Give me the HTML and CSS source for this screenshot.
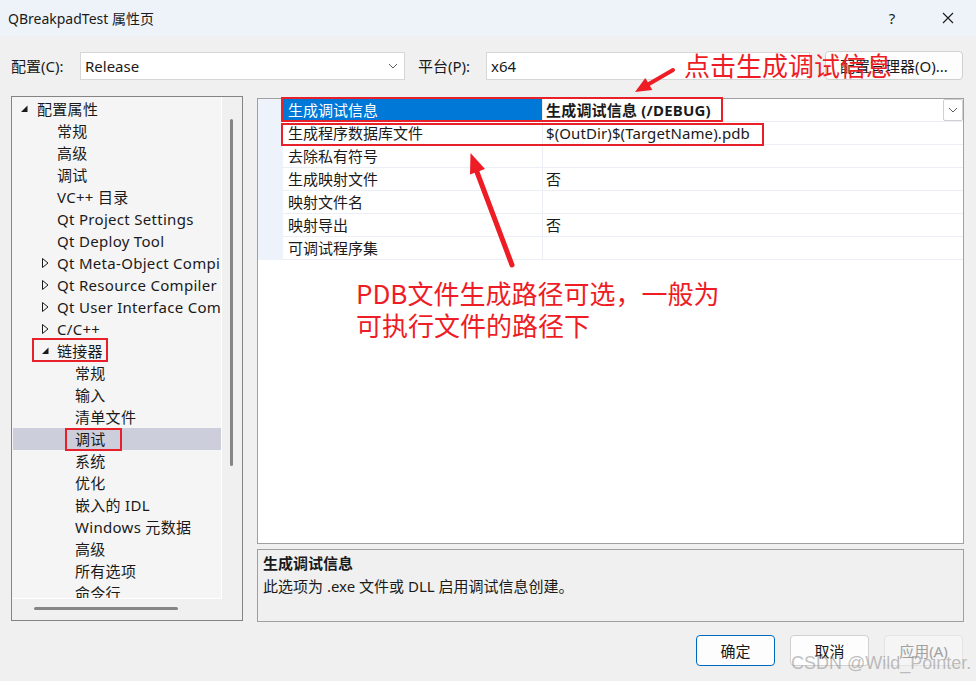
FILE: index.html
```html
<!DOCTYPE html>
<html lang="zh-CN">
<head>
<meta charset="utf-8">
<title>QBreakpadTest 属性页</title>
<link rel="stylesheet" href="styles.css">
</head>
<body>
<div class="window">
  <div class="titlebar">
    <span class="title">QBreakpadTest 属性页</span>
    <div class="tb-btns">
      <span class="tb-btn help">?</span>
      <span class="tb-btn close">
        <svg width="12" height="12" viewBox="0 0 12 12"><path d="M1 1L11 11M11 1L1 11" stroke="#1a1a1a" stroke-width="1.1" fill="none"/></svg>
      </span>
    </div>
  </div>

  <div class="content">
    <div class="toprow">
      <span class="lbl lbl-cfg">配置(C):</span>
      <div class="select sel-cfg"><span>Release</span>
        <svg class="chev" width="10" height="6" viewBox="0 0 10 6"><path d="M1 1L5 5L9 1" stroke="#606060" fill="none" stroke-width="1"/></svg>
      </div>
      <span class="lbl lbl-plat">平台(P):</span>
      <div class="select sel-plat"><span>x64</span></div>
      <button class="btn cfgmgr">配置管理器(O)...</button>
    </div>

    <div class="panes">
      <div class="tree">
        <div class="tree-body">
          <div class="node l0"><svg class="exp" width="18" height="16" viewBox="0 0 18 16"><path d="M8.5 4.5L8.5 11L2 11Z" fill="#1a1a1a"/></svg><span>配置属性</span></div>
          <div class="node l1"><span class="ic"></span><span>常规</span></div>
          <div class="node l1"><span class="ic"></span><span>高级</span></div>
          <div class="node l1"><span class="ic"></span><span>调试</span></div>
          <div class="node l1"><span class="ic"></span><span>VC++ 目录</span></div>
          <div class="node l1"><span class="ic"></span><span>Qt Project Settings</span></div>
          <div class="node l1"><span class="ic"></span><span>Qt Deploy Tool</span></div>
          <div class="node l1c"><svg class="exp" width="18" height="16" viewBox="0 0 18 16"><path d="M2.5 3.5L8 8L2.5 12.5Z" stroke="#1a1a1a" fill="none" stroke-width="1"/></svg><span>Qt Meta-Object Compiler</span></div>
          <div class="node l1c"><svg class="exp" width="18" height="16" viewBox="0 0 18 16"><path d="M2.5 3.5L8 8L2.5 12.5Z" stroke="#1a1a1a" fill="none" stroke-width="1"/></svg><span>Qt Resource Compiler</span></div>
          <div class="node l1c"><svg class="exp" width="18" height="16" viewBox="0 0 18 16"><path d="M2.5 3.5L8 8L2.5 12.5Z" stroke="#1a1a1a" fill="none" stroke-width="1"/></svg><span>Qt User Interface Compiler</span></div>
          <div class="node l1c"><svg class="exp" width="18" height="16" viewBox="0 0 18 16"><path d="M2.5 3.5L8 8L2.5 12.5Z" stroke="#1a1a1a" fill="none" stroke-width="1"/></svg><span>C/C++</span></div>
          <div class="node l1c"><svg class="exp" width="18" height="16" viewBox="0 0 18 16"><path d="M8.5 4.5L8.5 11L2 11Z" fill="#1a1a1a"/></svg><span>链接器</span></div>
          <div class="node l2"><span class="ic"></span><span>常规</span></div>
          <div class="node l2"><span class="ic"></span><span>输入</span></div>
          <div class="node l2"><span class="ic"></span><span>清单文件</span></div>
          <div class="node l2 selected"><span class="ic"></span><span>调试</span></div>
          <div class="node l2"><span class="ic"></span><span>系统</span></div>
          <div class="node l2"><span class="ic"></span><span>优化</span></div>
          <div class="node l2"><span class="ic"></span><span>嵌入的 IDL</span></div>
          <div class="node l2"><span class="ic"></span><span>Windows 元数据</span></div>
          <div class="node l2"><span class="ic"></span><span>高级</span></div>
          <div class="node l2"><span class="ic"></span><span>所有选项</span></div>
          <div class="node l2"><span class="ic"></span><span>命令行</span></div>
        </div>
        <div class="vscroll"><div class="vthumb"></div></div>
        <div class="hscroll"><div class="hthumb"></div></div>
        <div class="corner"></div>
      </div>

      <div class="rightcol">
        <div class="grid">
          <div class="prow active">
            <div class="gut"></div>
            <div class="pname">生成调试信息</div>
            <div class="pval"><b>生成调试信息 (/DEBUG)</b>
              <span class="ddbtn"><svg width="10" height="6" viewBox="0 0 10 6"><path d="M1 1L5 5L9 1" stroke="#606060" fill="none" stroke-width="1"/></svg></span>
            </div>
          </div>
          <div class="prow"><div class="gut"></div><div class="pname">生成程序数据库文件</div><div class="pval">$(OutDir)$(TargetName).pdb</div></div>
          <div class="prow"><div class="gut"></div><div class="pname">去除私有符号</div><div class="pval"></div></div>
          <div class="prow"><div class="gut"></div><div class="pname">生成映射文件</div><div class="pval">否</div></div>
          <div class="prow"><div class="gut"></div><div class="pname">映射文件名</div><div class="pval"></div></div>
          <div class="prow"><div class="gut"></div><div class="pname">映射导出</div><div class="pval">否</div></div>
          <div class="prow"><div class="gut"></div><div class="pname">可调试程序集</div><div class="pval"></div></div>
        </div>
        <div class="desc">
          <div class="desc-title">生成调试信息</div>
          <div class="desc-text">此选项为 .exe 文件或 DLL 启用调试信息创建。</div>
        </div>
      </div>
    </div>

    <div class="buttons">
      <button class="btn dlg primary">确定</button>
      <button class="btn dlg">取消</button>
      <button class="btn dlg disabled">应用(A)</button>
    </div>
  </div>

  <svg class="marks" width="976" height="681" viewBox="0 0 976 681">
    <g fill="none" stroke="#e8202a" stroke-width="2">
      <rect x="282" y="98" width="440" height="23"/>
      <rect x="282" y="124" width="481" height="21"/>
      <rect x="33" y="339" width="74" height="22"/>
      <rect x="66" y="429" width="55" height="21"/>
    </g>
    <g stroke="#ee1d25" stroke-linecap="round">
      <line x1="673" y1="70" x2="648" y2="84.5" stroke-width="4"/>
      <line x1="512" y1="265" x2="477" y2="172" stroke-width="5"/>
    </g>
    <g fill="#ee1d25">
      <polygon points="635,92 652.4,90 645.3,77.9"/>
      <polygon points="470.5,153 485,169 470,174.5"/>
    </g>
  </svg>
  <div class="note note-top">点击生成调试信息</div>
  <div class="note note-mid">PDB文件生成路径可选，一般为<br>可执行文件的路径下</div>
  <div class="watermark">CSDN @Wild_Pointer.</div>
</div>
</body>
</html>
```

FILE: styles.css
```css
* { box-sizing: border-box; }

html, body {
  margin: 0;
  padding: 0;
}

body {
  width: 976px;
  height: 681px;
  overflow: hidden;
  background: #f0f0f0;
  font-family: "Noto Sans", "Noto Sans CJK SC", sans-serif;
  font-size: 15px;
  color: #1a1a1a;
}

.window {
  position: relative;
  width: 976px;
  height: 681px;
}

/* title bar */
.titlebar {
  height: 36px;
  background: #eef3f9;
  display: flex;
  align-items: center;
  padding-left: 8px;
}
.title {
  font-size: 14px;
  color: #1a1a1a;
}
.tb-btns {
  margin-left: auto;
  display: flex;
  height: 36px;
}
.tb-btn {
  width: 56px;
  height: 36px;
  display: flex;
  align-items: center;
  justify-content: center;
}
.help {
  font-size: 15px;
}

/* content */
.content {
  padding: 15px 12px 0 11px;
}

.toprow {
  display: flex;
  align-items: center;
  height: 29px;
}
.lbl {
  flex: none;
  line-height: 20px;
}
.lbl-cfg { width: 69px; }
.lbl-plat { width: 68px; margin-left: 13px; }

.select {
  flex: none;
  height: 28px;
  background: #fff;
  border: 1px solid #d6d6d6;
  display: flex;
  align-items: center;
  padding-left: 4px;
  padding-right: 6px;
}
.sel-cfg { width: 325px; }
.sel-plat { width: 324px; }
.chev { margin-left: auto; }

.btn {
  font-family: "Noto Sans", "Noto Sans CJK SC", sans-serif;
  font-size: 15px;
  color: #1a1a1a;
  background: #fdfdfd;
  border: 1px solid #d0d0d0;
  border-radius: 4px;
  padding: 0;
}
.cfgmgr {
  flex: none;
  width: 138px;
  height: 29px;
  margin-left: 15px;
}

/* panes */
.panes {
  display: flex;
  gap: 14px;
  margin-top: 16px;
  height: 526px;
}

.tree {
  flex: none;
  width: 232px;
  height: 525px;
  border: 1px solid #848484;
  display: grid;
  grid-template-columns: 210px 20px;
  grid-template-rows: 502px 21px;
  background: #f0f0f0;
}
.tree-body {
  background: #f5f5f5;
  border-right: 1px solid #fff;
  border-bottom: 1px solid #fff;
  overflow: hidden;
  padding-top: 1px;
  white-space: nowrap;
  letter-spacing: 0.3px;
}
.node {
  height: 22px;
  display: flex;
  align-items: center;
  line-height: 22px;
}
.node .ic, .node .exp {
  flex: none;
  width: 18px;
  height: 16px;
  display: block;
}
.l0 { padding-left: 7px; }
.l1, .l1c { padding-left: 27px; }
.l1c .exp { margin-left: 1px; margin-right: -1px; }
.l2 { padding-left: 45px; }
.node.selected { background: #cccedb; margin-left: 1px; padding-left: 44px; }

.vscroll {
  padding: 22px 0 0 8px;
}
.vthumb {
  width: 3px;
  height: 347px;
  background: #858585;
  border-radius: 2px;
}
.hscroll {
  padding: 8px 0 0 22px;
}
.hthumb {
  width: 144px;
  height: 3px;
  background: #858585;
  border-radius: 2px;
}

.rightcol {
  flex: 1;
  padding-top: 2px;
  display: flex;
  flex-direction: column;
  gap: 5px;
}

.grid {
  height: 446px;
  background: #fff;
  border: 1px solid #a0a0a0;
}
.prow {
  display: grid;
  grid-template-columns: 25px 259px 1fr;
  height: 23px;
}
.gut {
  background: #eef2fb;
}
.pname, .pval {
  border-bottom: 1px solid #eceef5;
  line-height: 22px;
  white-space: nowrap;
}
.pname {
  padding-left: 5px;
}
.pval {
  border-left: 1px solid #eceef5;
  padding-left: 3px;
  display: flex;
  align-items: center;
  letter-spacing: 0.1px;
}
.active .pname {
  background: #0078d7;
  color: #fff;
}
.pval b {
  font-weight: 700;
  letter-spacing: 0.2px;
}
.ddbtn {
  margin-left: auto;
  width: 20px;
  height: 22px;
  background: #fff;
  border: 1px solid #cfcfcf;
  border-radius: 2px;
  display: flex;
  align-items: center;
  justify-content: center;
}

.desc {
  height: 73px;
  border: 1px solid #a0a0a0;
  background: #f0f0f0;
  padding: 2px 5px 0 5px;
}
.desc-title {
  font-weight: 700;
  line-height: 22px;
}
.desc-text {
  line-height: 24px;
}

/* dialog buttons */
.buttons {
  display: flex;
  justify-content: flex-end;
  gap: 15px;
  margin-top: 13px;
  padding-right: 1px;
}
.dlg {
  width: 79px;
  height: 31px;
}
.dlg.primary {
  border-color: #0067c0;
}
.dlg.disabled {
  color: #a0a0a0;
  background: #f5f5f5;
  border-color: #e3e3e3;
}

/* annotations */
.marks {
  position: absolute;
  left: 0;
  top: 0;
  pointer-events: none;
}
.note {
  position: absolute;
  font-family: "Noto Sans CJK SC", sans-serif;
  font-size: 26px;
  color: #ee1d25;
  white-space: nowrap;
}
.note-top {
  left: 684px;
  top: 49px;
  line-height: 32px;
}
.note-mid {
  left: 356px;
  top: 277px;
  line-height: 32px;
}
.watermark {
  position: absolute;
  left: 791px;
  top: 651px;
  font-family: "Liberation Sans", sans-serif;
  font-size: 18px;
  line-height: 24px;
  color: rgba(140, 140, 140, 0.55);
}
```
